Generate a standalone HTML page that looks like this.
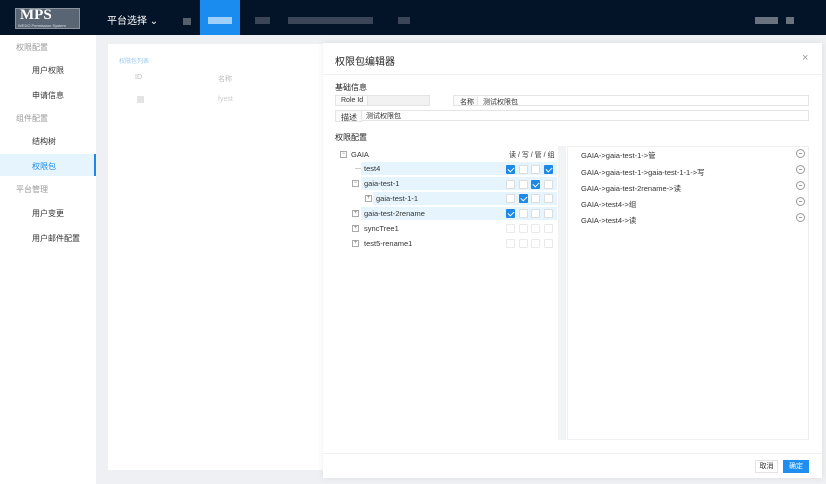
<!DOCTYPE html><html><head><meta charset="utf-8"><style>
*{box-sizing:border-box;margin:0;padding:0}
body{width:826px;height:484px;overflow:hidden;background:#eef0f3;font-family:"Liberation Sans","Noto Sans CJK SC",sans-serif;font-size:8px;color:#333;position:relative}
.a{position:absolute}
.hd{left:0;top:0;width:826px;height:35px;background:#031428}
.blur{background:#3a4658;height:7px}
.side{left:0;top:35px;width:96px;height:449px;background:#fff}
.grp{color:#999;font-size:8px;left:16px}
.it{left:32px;font-size:8px;color:#333}
.cb{width:9px;height:9px;border:1px solid #ddd;border-radius:1px;background:#fff}
.ck{background:#1e88e5;border-color:#1e88e5}
.ck:after{content:"";position:absolute;left:2px;top:0px;width:3px;height:5px;border:solid #fff;border-width:0 1.3px 1.3px 0;transform:rotate(45deg)}
.pl{width:7px;height:7px;border:1px solid #aaa;font-size:6px;line-height:5px;text-align:center;color:#777}
.hl{background:#e6f4fd;height:13px}
.rt{left:581px;font-size:7.5px;color:#333}
.tr{font-size:7.5px}
.mi{left:796px;width:9px;height:9px;border:1px solid #999;border-radius:50%}
.mi:after{content:"";position:absolute;left:2px;top:3px;width:3px;height:1px;background:#999}
</style></head><body>
<div class="a hd"></div>
<div class="a" style="left:15px;top:8px;width:65px;height:21px;background:#5a6573;border:1px solid #8a939e"></div>
<div class="a" style="left:20px;top:7px;color:#fff;font-family:'Liberation Serif',serif;font-size:15px;font-weight:bold">MPS</div>
<div class="a" style="left:18px;top:23px;color:#dde;font-size:4px">WEDO Permission System</div>
<div class="a" style="left:107px;top:12px;color:#fff;font-size:10px">平台选择 ⌄</div>
<div class="a blur" style="left:183px;top:18px;width:8px;background:#56606d"></div>
<div class="a" style="left:200px;top:0;width:40px;height:35px;background:#1a8cf0"></div>
<div class="a" style="left:208px;top:17px;width:24px;height:7px;background:#9fd0fb"></div>
<div class="a blur" style="left:255px;top:17px;width:15px"></div>
<div class="a blur" style="left:288px;top:17px;width:85px"></div>
<div class="a blur" style="left:398px;top:17px;width:12px"></div>
<div class="a blur" style="left:755px;top:17px;width:23px;background:#6a7280"></div>
<div class="a blur" style="left:786px;top:17px;width:8px;background:#6a7280"></div>
<div class="a side"></div>
<div class="a grp" style="top:42px">权限配置</div>
<div class="a it" style="top:65px">用户权限</div>
<div class="a it" style="top:90px">申请信息</div>
<div class="a grp" style="top:113px">组件配置</div>
<div class="a it" style="top:136px">结构树</div>
<div class="a" style="left:0;top:154px;width:96px;height:22px;background:#e6f4fd;border-right:2px solid #1e88e5"></div>
<div class="a it" style="top:161px;color:#1e88e5">权限包</div>
<div class="a grp" style="top:184px">平台管理</div>
<div class="a it" style="top:208px">用户变更</div>
<div class="a it" style="top:233px">用户邮件配置</div>
<div class="a" style="left:108px;top:44px;width:215px;height:426px;background:#fff"></div>
<div class="a" style="left:119px;top:56px;color:#9cc9f0;font-size:6px">权限包列表</div>
<div class="a" style="left:135px;top:74px;color:#bbb;font-size:7px">ID</div>
<div class="a" style="left:218px;top:74px;color:#bbb;font-size:7px">名称</div>
<div class="a" style="left:137px;top:96px;width:7px;height:7px;background:#e4e4e4"></div>
<div class="a" style="left:218px;top:96px;color:#ccc;font-size:7px">fyest</div>
<div class="a" style="left:323px;top:43px;width:499px;height:435px;background:#fff;box-shadow:0 0 6px rgba(0,0,0,.08)"></div>
<div class="a" style="left:335px;top:53px;font-size:10px;color:#222">权限包编辑器</div>
<div class="a" style="left:802px;top:52px;font-size:11px;color:#999">×</div>
<div class="a" style="left:323px;top:74px;width:499px;height:1px;background:#f0f0f0"></div>
<div class="a" style="left:335px;top:82px;font-size:8px;color:#222">基础信息</div>
<div class="a" style="left:335px;top:95px;width:95px;height:11px;border:1px solid #e4e4e4;background:#f2f2f2"></div>
<div class="a" style="left:335px;top:95px;width:33px;height:11px;border:1px solid #e4e4e4;background:#fafafa"></div>
<div class="a" style="left:341px;top:97px;font-size:7px">Role Id</div>
<div class="a" style="left:453px;top:95px;width:356px;height:11px;border:1px solid #e4e4e4"></div>
<div class="a" style="left:453px;top:95px;width:25px;height:11px;border:1px solid #e4e4e4;background:#fafafa"></div>
<div class="a" style="left:460px;top:97px;font-size:7px">名称</div>
<div class="a" style="left:483px;top:97px;font-size:7px">测试权限包</div>
<div class="a" style="left:335px;top:110px;width:474px;height:11px;border:1px solid #e4e4e4"></div>
<div class="a" style="left:335px;top:110px;width:27px;height:12px;border:1px solid #e4e4e4;background:#fafafa"></div>
<div class="a" style="left:341px;top:112px;font-size:8px">描述</div>
<div class="a" style="left:366px;top:111px;font-size:7px">测试权限包</div>
<div class="a" style="left:335px;top:132px;font-size:8px;color:#222">权限配置</div>
<div class="a" style="left:558px;top:146px;width:8px;height:294px;background:#f2f3f5"></div>
<div class="a" style="left:567px;top:146px;width:242px;height:294px;border:1px solid #f0f0f0"></div>
<div class="a pl" style="left:340px;top:151px">−</div>
<div class="a tr" style="left:351px;top:150px">GAIA</div>
<div class="a" style="left:509px;top:150px;font-size:7px">读 / 写 / 管 / 组</div>
<div class="a hl" style="left:361px;top:162px;width:196px"></div>
<div class="a hl" style="left:361px;top:177px;width:196px"></div>
<div class="a hl" style="left:373px;top:192px;width:184px"></div>
<div class="a hl" style="left:361px;top:207px;width:196px"></div>
<div class="a" style="left:355px;top:168px;width:6px;height:1px;background:#ccc"></div>
<div class="a tr" style="left:364px;top:164px">test4</div>
<div class="a pl" style="left:352px;top:180px">−</div>
<div class="a tr" style="left:364px;top:179px">gaia-test-1</div>
<div class="a pl" style="left:365px;top:195px">+</div>
<div class="a tr" style="left:376px;top:194px">gaia-test-1-1</div>
<div class="a pl" style="left:352px;top:210px">+</div>
<div class="a tr" style="left:364px;top:209px">gaia-test-2rename</div>
<div class="a pl" style="left:352px;top:225px">+</div>
<div class="a tr" style="left:364px;top:224px">syncTree1</div>
<div class="a pl" style="left:352px;top:240px">+</div>
<div class="a tr" style="left:364px;top:239px">test5-rename1</div>
<div class="a cb ck" style="left:506px;top:165px"></div><div class="a cb" style="left:519px;top:165px"></div><div class="a cb" style="left:531px;top:165px"></div><div class="a cb ck" style="left:544px;top:165px"></div>
<div class="a cb" style="left:506px;top:180px"></div><div class="a cb" style="left:519px;top:180px"></div><div class="a cb ck" style="left:531px;top:180px"></div><div class="a cb" style="left:544px;top:180px"></div>
<div class="a cb" style="left:506px;top:194px"></div><div class="a cb ck" style="left:519px;top:194px"></div><div class="a cb" style="left:531px;top:194px"></div><div class="a cb" style="left:544px;top:194px"></div>
<div class="a cb ck" style="left:506px;top:209px"></div><div class="a cb" style="left:519px;top:209px"></div><div class="a cb" style="left:531px;top:209px"></div><div class="a cb" style="left:544px;top:209px"></div>
<div class="a cb" style="left:506px;top:224px;opacity:.6"></div><div class="a cb" style="left:519px;top:224px;opacity:.6"></div><div class="a cb" style="left:531px;top:224px;opacity:.6"></div><div class="a cb" style="left:544px;top:224px;opacity:.6"></div>
<div class="a cb" style="left:506px;top:239px;opacity:.6"></div><div class="a cb" style="left:519px;top:239px;opacity:.6"></div><div class="a cb" style="left:531px;top:239px;opacity:.6"></div><div class="a cb" style="left:544px;top:239px;opacity:.6"></div>
<div class="a rt" style="top:150px">GAIA-&gt;gaia-test-1-&gt;管</div><div class="a mi" style="top:149px"></div>
<div class="a rt" style="top:167px">GAIA-&gt;gaia-test-1-&gt;gaia-test-1-1-&gt;写</div><div class="a mi" style="top:165px"></div>
<div class="a rt" style="top:183px">GAIA-&gt;gaia-test-2rename-&gt;读</div><div class="a mi" style="top:181px"></div>
<div class="a rt" style="top:199px">GAIA-&gt;test4-&gt;组</div><div class="a mi" style="top:197px"></div>
<div class="a rt" style="top:215px">GAIA-&gt;test4-&gt;读</div><div class="a mi" style="top:213px"></div>
<div class="a" style="left:323px;top:453px;width:499px;height:1px;background:#f0f0f0"></div>
<div class="a" style="left:755px;top:460px;width:23px;height:13px;border:1px solid #e4e4e4;font-size:7px;line-height:11px;text-align:center">取消</div>
<div class="a" style="left:783px;top:460px;width:26px;height:13px;background:#1e8ff0;color:#fff;font-size:7px;line-height:13px;text-align:center">确定</div>
</body></html>
